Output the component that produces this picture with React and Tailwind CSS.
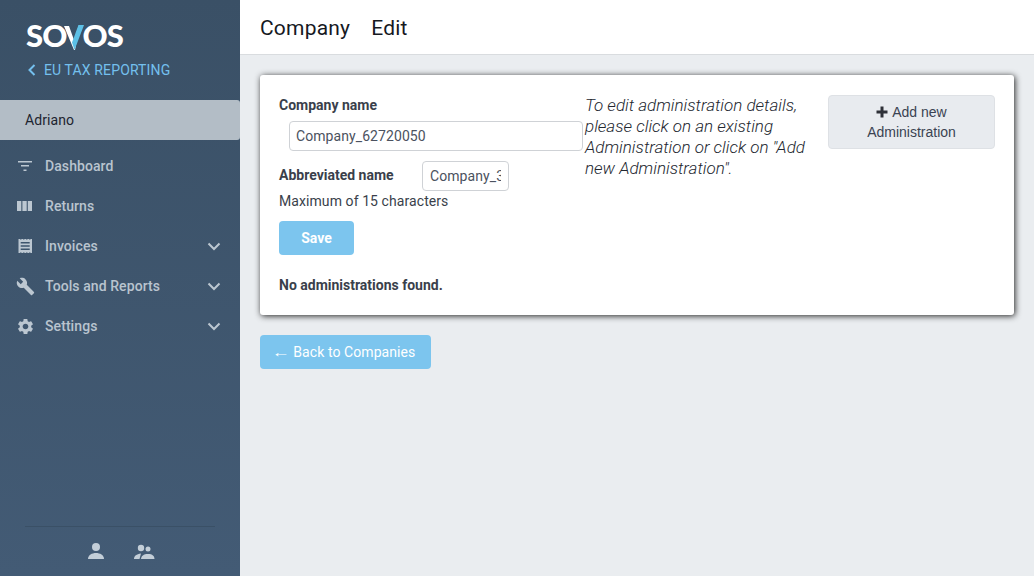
import React from "react";
import { MdBuild, MdSettings } from "react-icons/md";

const F = { fontFamily: "Roboto, sans-serif" };

function Chevron() {
  return (
    <svg width="14" height="9" viewBox="0 0 14 9" className="ml-auto mr-[19px]" fill="none">
      <path d="M1.500 1.500 7 7l5.500-5.500" stroke="#bcc7d1" strokeWidth="2" />
    </svg>
  );
}

const icons = {
  dash: (
    <svg width="18" height="18" viewBox="0 0 18 18" fill="#bcc7d1" className="ml-4 shrink-0">
      <path d="M2 4h14v1.500H2zM5 8h8v1.500H5zM7.500 12.500h3V14h-3z" />
    </svg>
  ),
  returns: (
    <svg width="18" height="18" viewBox="0 0 18 18" fill="#bcc7d1" className="ml-4 shrink-0">
      <path d="M1 4h4.300v10H1zM6.400 4h4.300v10H6.400zM11.800 4H16v10h-4.200z" />
    </svg>
  ),
  invoices: (
    <svg width="18" height="18" viewBox="0 0 18 18" fill="#bcc7d1" className="ml-4 shrink-0">
      <path
        fillRule="evenodd"
        d="M2.500 2h1.500v.6h1.500V2H7v.6h1.500V2H10v.6h1.500V2H13v.6h1.500V2H16v14h-1.500v-.6H13v.6h-1.500v-.6H10v.6H8.500v-.6H7v.6H5.500v-.6H4v.6H2.500zM4.700 5v1.600h9V5zM4.700 8.200v1.600h9V8.200zM4.700 11.400V13h9v-1.600z"
      />
    </svg>
  ),
  tools: <MdBuild size={19} color="#bcc7d1" className="ml-[15.500px] shrink-0" />,
  gear: <MdSettings size={19} color="#bcc7d1" className="ml-[15.500px] shrink-0" />,
};

function NavItem({ icon, label, chevron }) {
  const small = icon === "tools" || icon === "gear";
  return (
    <div className="flex h-10 items-center">
      {icons[icon]}
      <span className={small ? "ml-[10.500px] text-[14px] font-medium text-[#b9c4cf]" : "ml-[11px] text-[14px] font-medium text-[#b9c4cf]"}>
        {label}
      </span>
      {chevron && <Chevron />}
    </div>
  );
}

export default function App() {
  return (
    <div className="flex h-[576px] w-[1034px] overflow-hidden bg-[#eaedf0] text-[14px] tracking-[0.08px] text-[#3a3f4b]" style={F}>
      <aside className="flex w-[240px] shrink-0 flex-col bg-gradient-to-b from-[#3a5066] to-[#435b75]">
        <div className="h-[100px] pl-[26px] pt-[16px]">
          <div
            className="flex h-[38px] items-center text-[31px] font-black leading-none tracking-[-0.9px] text-white"
            style={{ fontFamily: "Lato, sans-serif" }}
          >
            <span>SO</span>
            <svg width="20" height="26" viewBox="0 0 20 26" className="mx-[-2px] mt-[5px]">
              <path d="M0 1h5l5 14L15 0h1l-5 25h-1z" fill="#fff" />
              <path d="M10.500 25 8 17.500 14.500 0H20z" fill="#5cc0e6" />
            </svg>
            <span>OS</span>
          </div>
          <div className="mt-[6px] flex h-[20px] items-center">
            <svg width="10" height="12" viewBox="0 0 10 12" fill="none" className="ml-[1px]">
              <path d="M7.500 1 2.500 6l5 5" stroke="#74c0ee" strokeWidth="2" />
            </svg>
            <span className="ml-[7px] text-[14px] tracking-[0.13px] text-[#74c0ee]">EU TAX REPORTING</span>
          </div>
        </div>
        <div className="flex h-10 items-center rounded-tr-[3px] rounded-br-[3px] bg-[#b3bdc6] pl-[25px] text-[14px] text-[#1d2430]">
          Adriano
        </div>
        <nav className="mt-[6px]">
          <NavItem icon="dash" label="Dashboard" />
          <NavItem icon="returns" label="Returns" />
          <NavItem icon="invoices" label="Invoices" chevron />
          <NavItem icon="tools" label="Tools and Reports" chevron />
          <NavItem icon="gear" label="Settings" chevron />
        </nav>
        <div className="mx-[25px] mt-auto flex h-[50px] justify-center gap-[24px] border-t border-[#3a5066] pt-[15px]">
          <svg width="24" height="20" viewBox="0 0 24 20" fill="#c3ced8">
            <circle cx="12" cy="5" r="4" />
            <path d="M4 17c0-4 4-6 8-6s8 2 8 6z" />
          </svg>
          <svg width="24" height="20" viewBox="0 0 24 20" fill="#c3ced8">
            <circle cx="9" cy="6" r="3.200" />
            <circle cx="16" cy="7" r="2.500" />
            <path d="M2 17c0-3 2.500-5 7-5.500L7.500 17zM9 17c.3-3 2.500-5 7-5s6.500 2 6.500 5z" />
          </svg>
        </div>
      </aside>

      <div className="flex min-w-0 flex-1 flex-col">
        <header className="flex h-[55px] shrink-0 items-center gap-[21px] border-b border-[#d9dcdf] bg-white pl-5 pt-[3px] text-[21px] tracking-[0.2px] text-[#16191f]">
          <span>Company</span>
          <span>Edit</span>
        </header>
        <main className="p-5">
          <section className="flex h-[240px] items-start rounded-[3px] bg-white pl-[19px] pr-[19px] pt-5 shadow-[1px_1px_6px_rgba(0,0,0,0.85)]">
            <div className="w-[306px] shrink-0">
              <div className="text-[14px] font-bold leading-5 tracking-normal">Company name</div>
              <input
                readOnly
                value="Company_62720050"
                className="ml-[10px] mt-[6px] block h-[30px] w-[294px] rounded-[4px] border border-[#cfd2d6] bg-white px-[6px] text-[14px] tracking-[0.08px] text-[#4b5260] outline-none"
              />
              <div className="mt-[10px] flex h-[30px] items-center">
                <span className="mt-[-2px] w-[143px] text-[14px] font-bold tracking-normal">Abbreviated name</span>
                <input
                  readOnly
                  value="Company_3"
                  className="h-[30px] w-[87px] rounded-[4px] border border-[#cfd2d6] bg-white px-[7px] text-[14px] tracking-[0.08px] text-[#4b5260] outline-none"
                />
              </div>
              <div className="leading-5">Maximum of 15 characters</div>
              <button className="mt-[10px] block h-[34px] w-[75px] rounded-[4px] bg-[#7cc5ee] text-[14px] font-bold tracking-normal text-white">
                Save
              </button>
              <div className="mt-[20px] text-[14px] font-bold leading-5 tracking-normal">No administrations found.</div>
            </div>
            <p className="w-[228px] shrink-0 text-[17px] font-light italic leading-[21px] tracking-normal text-[#23272f]">
              To edit administration details, please click on an existing Administration or click on "Add new
              Administration".
            </p>
            <button
              className="ml-auto h-[54px] w-[167px] rounded-[4px] border border-[#dee1e5] bg-[#e8ebef] text-[14px] leading-5 tracking-normal text-[#3a4352]"
              style={{ fontFamily: "'Liberation Sans', Arial, sans-serif" }}
            >
              <svg width="12" height="12" viewBox="0 0 12 12" fill="#2e3138" className="mr-[4px] inline-block align-[-1px]">
                <path d="M4.500 0.500h3v4h4v3h-4v4h-3v-4h-4v-3h4z" />
              </svg>
              Add new
              <br />
              Administration
            </button>
          </section>
          <button className="mt-5 h-[34px] w-[171px] rounded-[4px] bg-[#7cc5ee] text-[14px] text-white">
            <span className="inline-block origin-right scale-x-[1.3]">←</span> Back to Companies
          </button>
        </main>
      </div>
    </div>
  );
}
